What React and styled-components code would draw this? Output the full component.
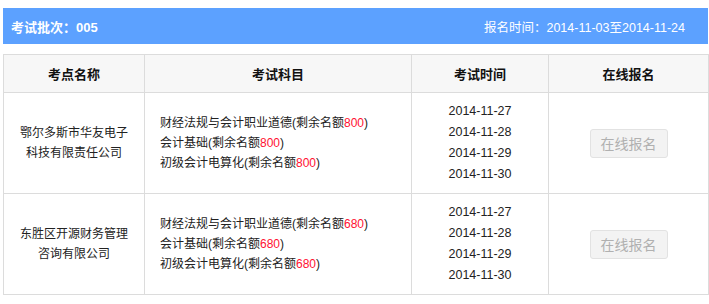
import React from 'react';
import styled, { createGlobalStyle } from 'styled-components';

const GlobalStyle = createGlobalStyle`
  body {
    margin: 0;
    font-family: "Liberation Sans", Arial, "Noto Sans CJK SC", sans-serif;
    font-size: 12px;
    color: #222;
    background: #fff;
  }
`;

const Page = styled.div`
  padding: 8px 1px 0 3px;
`;

const BatchBar = styled.div`
  height: 36px;
  background-color: #5ca1ff;
  color: #fff;
  display: flex;
  align-items: center;
  justify-content: space-between;
  padding: 0 23px 0 8px;
`;

const BatchTitle = styled.span`
  font-size: 13px;
  font-weight: bold;
`;

const BatchTime = styled.span`
  font-size: 12.5px;
`;

const Table = styled.table`
  margin-top: 10px;
  width: 705px;
  border-collapse: collapse;
  table-layout: fixed;
`;

const HeadCell = styled.th`
  height: 37px;
  padding: 0;
  background-color: #f7f7f7;
  border: 1px solid #dcdcdc;
  font-size: 13px;
  font-weight: bold;
  color: #111;
  text-align: center;
`;

const Cell = styled.td`
  height: 100px;
  border: 1px solid #dcdcdc;
  text-align: ${p => p.align || 'center'};
  padding: ${p => p.align === 'left' ? '0 0 0 15px' : '0'};
  line-height: ${p => p.lh || '20px'};
  vertical-align: middle;
  font-size: ${p => p.size || '12px'};
`;

const Quota = styled.span`
  color: #ff1133;
`;

const ApplyButton = styled.button`
  width: 78px;
  height: 29px;
  border: 1px solid #e2e2e2;
  border-radius: 3px;
  background-color: #f3f3f3;
  color: #b0b0b0;
  font-family: inherit;
  font-size: 14px;
  cursor: not-allowed;
`;

const rows = [
  {
    name: ['鄂尔多斯市华友电子', '科技有限责任公司'],
    quota: '800',
  },
  {
    name: ['东胜区开源财务管理', '咨询有限公司'],
    quota: '680',
  },
];

const subjects = ['财经法规与会计职业道德', '会计基础', '初级会计电算化'];
const dates = ['2014-11-27', '2014-11-28', '2014-11-29', '2014-11-30'];

const App = () => (
  <Page>
    <GlobalStyle />
    <BatchBar>
      <BatchTitle>考试批次：005</BatchTitle>
      <BatchTime>报名时间：2014-11-03至2014-11-24</BatchTime>
    </BatchBar>
    <Table>
      <colgroup>
        <col style={{ width: 141 }} />
        <col style={{ width: 267 }} />
        <col style={{ width: 137 }} />
        <col style={{ width: 160 }} />
      </colgroup>
      <thead>
        <tr>
          <HeadCell>考点名称</HeadCell>
          <HeadCell>考试科目</HeadCell>
          <HeadCell>考试时间</HeadCell>
          <HeadCell>在线报名</HeadCell>
        </tr>
      </thead>
      <tbody>
        {rows.map(row => (
          <tr key={row.quota}>
            <Cell>
              {row.name.map(n => <div key={n}>{n}</div>)}
            </Cell>
            <Cell align="left">
              {subjects.map(s => (
                <div key={s}>
                  {s}(剩余名额<Quota>{row.quota}</Quota>)
                </div>
              ))}
            </Cell>
            <Cell lh="21px" size="12.5px">
              {dates.map(d => <div key={d}>{d}</div>)}
            </Cell>
            <Cell>
              <ApplyButton disabled>在线报名</ApplyButton>
            </Cell>
          </tr>
        ))}
      </tbody>
    </Table>
  </Page>
);

export default App;
